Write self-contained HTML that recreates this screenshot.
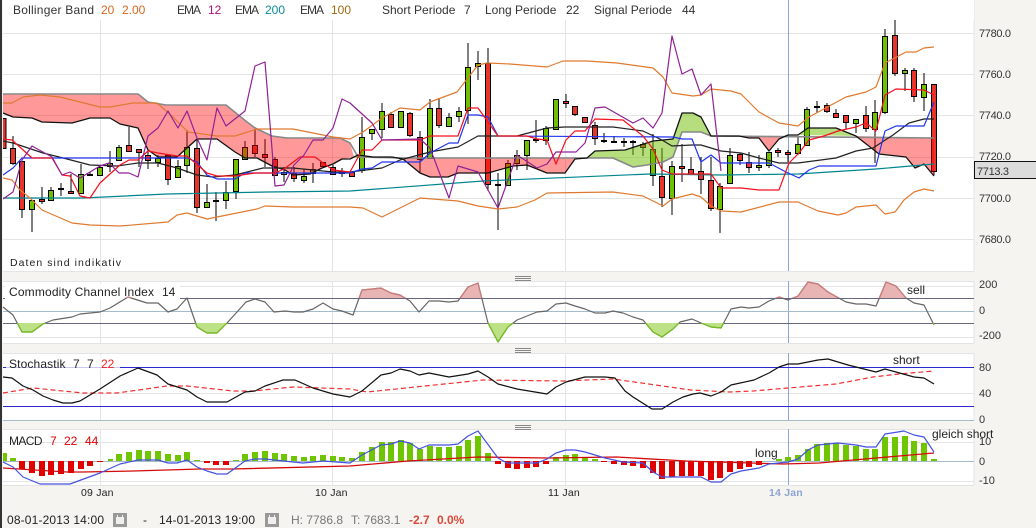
<!DOCTYPE html>
<html><head><meta charset="utf-8"><title>Chart</title>
<style>
html,body{margin:0;padding:0;background:#f5f4f1;width:1036px;height:528px;overflow:hidden}
svg{display:block}
text{font-family:"Liberation Sans",sans-serif;font-size:12px;fill:#333}
.ln{fill:none;stroke-linejoin:round;stroke-width:1.2}
.ax{font-size:11px;fill:#333}
.d{font-size:10.5px;fill:#222;letter-spacing:.2px}
</style></head><body>
<svg width="1036" height="528" viewBox="0 0 1036 528" xmlns="http://www.w3.org/2000/svg">
<defs>
<clipPath id="up"><rect x="0" y="270" width="974" height="28"/></clipPath>
<clipPath id="dn"><rect x="0" y="323" width="974" height="22"/></clipPath>
<clipPath id="main"><rect x="3" y="0" width="971" height="271"/></clipPath>
</defs>
<rect width="1036" height="528" fill="#f5f4f1"/>
<rect x="0" y="0" width="2" height="528" fill="#333"/>
<!-- panes -->
<rect x="3" y="0" width="971" height="271" fill="#fff"/>
<rect x="3" y="281" width="971" height="62" fill="#fff"/>
<rect x="3" y="353" width="971" height="67" fill="#fff"/>
<rect x="3" y="429" width="971" height="56" fill="#fff"/>
<g shape-rendering="crispEdges" fill="none" stroke-width="1">
<path stroke="#e4e4e4" d="M3 33.5H974M3 74.5H974M3 115.5H974M3 157.5H974M3 198.5H974M3 239.5H974M3 271.5H974M974 0V271M3 281.5H974M3 286.5H974M3 337.5H974M3 343.5H974M974 281V343M3 353.5H974M3 393.5H974M974 353V420M3 429.5H974M3 442.5H974M3 481.5H974M3 485.5H974M974 429V485"/>
<path stroke="#e4e4e4" d="M100.5 20V271M332.5 20V271M565.5 20V271M100.5 281V343M332.5 281V343M565.5 281V343M100.5 353V420M332.5 353V420M565.5 353V420M100.5 429V485M332.5 429V485M565.5 429V485"/>
<path stroke="#8fa3dc" d="M788.5 0V271M788.5 281V343M788.5 353V420M788.5 429V485"/>
<path stroke="#67677f" d="M3 298.5H974M3 323.5H974"/>
<path stroke="#a5bccb" d="M3 311.5H974M3 461.5H974M3 420.5H974"/>
<path stroke="#2a2ad0" d="M3 367.5H974M3 406.5H974"/>
</g>
<!-- candles -->
<g clip-path="url(#main)" shape-rendering="crispEdges">
<path fill="none" stroke="#000" stroke-width="1" d="M13 136V165M22 161V218M32 200V232M42 187V204M51 187V200M61 183V196M71 174V193M81 164V193M90 172V176M100 165V175M110 151V172M119 145V160M129 127V152M139 149V167M148 152V169M158 155V167M168 155V185M178 160V177M187 130V173M197 139V213M207 184V208M216 192V221M226 181V209M236 159V199M245 141V159M255 127V157M265 139V167M275 157V175M284 167V182M294 167V182M304 169V183M313 163V183M323 162V166M333 165V174M342 168V177M352 172V176M362 117V173M372 129V140M382 103V138M391 112V128M401 111V128M410 112V137M420 131V173M430 99V158M439 98V128M449 113V127M459 107V122M468 43V124M478 51V80M488 48V191M498 173V230M508 160V185M517 150V170M527 140V170M536 120V143M546 126V145M556 99V130M566 94V108M575 106V116M585 117V122M595 122V145M604 133V143M614 136V143M624 138V147M633 140V155M643 142V156M653 134V186M662 148V207M672 161V215M682 144V182M691 157V174M701 157V194M711 157V211M720 183V233M730 148V183M740 153V165M749 152V173M759 155V171M769 152V168M778 148V157M788 150V162M798 137V155M807 107V145M817 101V113M827 103V113M836 109V117M846 115V129M856 119V133M866 106V132M875 100V163M885 29V114M895 19V76M905 68V91M914 68V102M924 73V111M934 84V175"/>
<path fill="none" stroke="#000" stroke-width="2" d="M58 189H64M87 175H93M213 201H219M339 173H345M495 185H501M533 140H539M601 141H607M611 142H617M621 142H627M630 142H636M814 107H820"/>
<path fill="#e8352c" stroke="#000" stroke-width="1" d="M2.500 118.500h3.500V148.500h-3.500zM10.500 148.500h5V163.500h-5zM19.500 161.500h5V209.500h-5zM39.500 199.500h5V201.500h-5zM68.500 191.500h5V193.500h-5zM126.500 145.500h5V151.500h-5zM136.500 149.500h5V152.500h-5zM145.500 155.500h5V160.500h-5zM165.500 155.500h5V179.500h-5zM194.500 148.500h5V207.500h-5zM252.500 145.500h5V153.500h-5zM262.500 154.500h5V157.500h-5zM272.500 159.500h5V175.500h-5zM291.500 173.500h5V178.500h-5zM320.500 162.500h5V166.500h-5zM330.500 167.500h5V174.500h-5zM349.500 172.500h5V176.500h-5zM388.500 114.500h5V127.500h-5zM407.500 113.500h5V135.500h-5zM417.500 137.500h5V159.500h-5zM436.500 108.500h5V125.500h-5zM485.500 63.500h5V184.500h-5zM563.500 101.500h5V103.500h-5zM572.500 106.500h5V114.500h-5zM582.500 117.500h5V122.500h-5zM592.500 125.500h5V138.500h-5zM640.500 144.500h5V147.500h-5zM659.500 176.500h5V197.500h-5zM679.500 166.500h5V168.500h-5zM688.500 169.500h5V174.500h-5zM698.500 171.500h5V179.500h-5zM708.500 180.500h5V208.500h-5zM737.500 154.500h5V160.500h-5zM746.500 162.500h5V167.500h-5zM775.500 150.500h5V152.500h-5zM785.500 152.500h5V154.500h-5zM824.500 105.500h5V111.500h-5zM833.500 113.500h5V117.500h-5zM843.500 115.500h5V122.500h-5zM863.500 115.500h5V128.500h-5zM892.500 35.500h5V73.500h-5zM911.500 70.500h5V96.500h-5zM931.500 84.500h5V171.500h-5z"/>
<path fill="#6ec000" stroke="#000" stroke-width="1" d="M29.500 200.500h5V209.500h-5zM48.500 190.500h5V200.500h-5zM78.500 174.500h5V193.500h-5zM97.500 167.500h5V175.500h-5zM107.500 163.500h5V166.500h-5zM116.500 147.500h5V160.500h-5zM155.500 158.500h5V162.500h-5zM175.500 166.500h5V177.500h-5zM184.500 147.500h5V165.500h-5zM204.500 202.500h5V207.500h-5zM223.500 192.500h5V200.500h-5zM233.500 159.500h5V191.500h-5zM242.500 147.500h5V159.500h-5zM281.500 172.500h5V174.500h-5zM301.500 176.500h5V180.500h-5zM310.500 169.500h5V173.500h-5zM359.500 137.500h5V170.500h-5zM369.500 129.500h5V133.500h-5zM379.500 111.500h5V129.500h-5zM398.500 111.500h5V127.500h-5zM427.500 108.500h5V158.500h-5zM446.500 117.500h5V126.500h-5zM456.500 111.500h5V116.500h-5zM465.500 67.500h5V110.500h-5zM475.500 63.500h5V66.500h-5zM505.500 163.500h5V185.500h-5zM514.500 155.500h5V163.500h-5zM524.500 140.500h5V155.500h-5zM543.500 128.500h5V140.500h-5zM553.500 99.500h5V129.500h-5zM650.500 149.500h5V175.500h-5zM669.500 166.500h5V198.500h-5zM717.500 186.500h5V209.500h-5zM727.500 155.500h5V183.500h-5zM756.500 165.500h5V167.500h-5zM766.500 152.500h5V165.500h-5zM795.500 144.500h5V153.500h-5zM804.500 109.500h5V145.500h-5zM853.500 119.500h5V123.500h-5zM872.500 112.500h5V129.500h-5zM882.500 36.500h5V112.500h-5zM902.500 70.500h5V73.500h-5zM921.500 84.500h5V97.500h-5z"/>
</g>
<!-- kumo -->
<g clip-path="url(#main)">
<polygon fill="rgba(255,0,0,.4)" points="3,94 138,94 148,102 166,105 226,105 247,122 255,128 272,136 287,138 340,138 350,143 354,157 342,159 333,164 322,168 310,174 293,175 285,170 272,166 257,158 245,158 235,152 217,139 197,139 177,157 158,157 148,150 138,128 120,124 110,118 90,118 83,120 72,123 42,122 32,118 13,117 3,113"/>
<polygon fill="rgba(110,190,0,.5)" points="354,158 358,155 373,157 403,158"/>
<polygon fill="rgba(255,0,0,.4)" points="403,158 575,158 565,173 547,173 527,165 513,166 488,173 458,173 448,177 430,177 420,173"/>
<polygon fill="rgba(110,190,0,.5)" points="587,158 595,151 625,150 653,141 673,139 682,113 693,113 701,117 711,136 701,132 682,132 673,157 663,162 647,165 633,167 613,158"/>
<polygon fill="rgba(255,0,0,.4)" points="739,136 749,138 759,138 769,151 779,139 788,136"/>
<polygon fill="rgba(110,190,0,.5)" points="800,135 808,128 836,128 856,136"/>
<polygon fill="rgba(255,0,0,.4)" points="856,136 934,138 934,176 924,164 915,168 906,157 879,154"/>
<polyline class="ln" stroke="#888" style="stroke-width:1.6" points="3,94 138,94 148,102 166,105 226,105 247,122 255,128 272,136 287,138 340,138 350,143 358,157 403,158 575,158 613,158 633,167 647,165 663,162 673,157 682,132 701,132 711,136 934,138"/>
<polyline class="ln" stroke="#111" style="stroke-width:1.3" points="3,113 13,117 32,118 42,122 72,123 83,120 90,118 110,118 120,124 138,128 148,150 158,157 177,157 197,139 217,139 235,152 245,158 257,158 272,166 285,170 293,175 310,174 322,168 333,164 342,159 350,159 358,155 373,157 392,157 403,159 420,173 430,177 448,177 458,173 488,173 513,166 527,165 547,173 565,173 575,159 587,158 595,151 625,150 653,141 673,139 682,113 693,113 701,117 711,136 739,136 749,138 759,138 769,151 779,139 788,135 798,135 808,128 836,128 856,136 879,154 906,157 915,168 924,164 934,176"/>
<!-- teal -->
<polyline class="ln" stroke="#00858f" points="3,198 83,198 167,194 267,192 350,191 483,181 650,174 721,175 798,174 876,169 934,164"/>
<!-- bollinger -->
<polyline class="ln" stroke="#e07a30" points="3,103 12,103 23,97 40,95 60,97 80,102 100,107 110,107 133,103 157,103 173,117 188,132 217,136 235,136 257,129 293,129 333,137 350,139 363,132 382,118 400,108 420,110 430,102 457,92 478,65 487,63 510,64 547,67 563,61 587,61 617,63 653,68 663,77 672,93 693,96 701,95 711,89 731,91 741,94 759,112 779,123 798,126 809,117 846,97 866,92 876,87 885,63 906,52 916,52 924,48 934,47"/>
<polyline class="ln" stroke="#e07a30" points="3,178 12,180 20,190 30,198 42,210 72,223 90,225 120,226 168,222 177,215 187,213 207,219 227,215 257,209 265,206 293,207 350,207 363,208 382,217 400,208 420,198 458,201 478,206 498,209 517,207 535,200 547,193 613,192 643,196 663,206 672,199 692,194 701,197 711,206 721,211 741,212 779,202 798,202 818,211 838,215 846,213 856,207 876,205 885,214 895,212 904,200 914,192 924,189 934,191"/>
<!-- black thin -->
<polyline class="ln" stroke="#222" points="3,141 13,143 43,153 67,159 90,165 117,166 138,163 158,163 177,168 197,175 213,177 235,175 263,168 293,168 333,172 350,172 382,168 400,160 430,152 458,147 478,136 497,136 517,136 547,128 565,127 613,127 643,131 662,140 672,146 692,145 701,145 721,151 741,153 759,158 779,163 798,163 836,158 856,151 873,148 893,135 909,123 924,119 934,119"/>
<!-- blue -->
<polyline class="ln" stroke="#2035f0" points="3,175 13,168 22,158 32,158 187,158 197,162 207,175 217,179 235,179 245,173 350,173 362,169 372,168 382,162 420,162 430,153 449,143 458,143 468,115 478,115 488,117 498,136 673,137 682,139 692,139 701,162 711,155 721,163 769,163 786,172 799,178 809,170 819,166 876,166 885,131 896,126 924,126 934,102"/>
<!-- red -->
<polyline class="ln" stroke="#f5101e" points="3,139 12,140 32,158 52,158 62,175 70,176 80,196 90,198 100,183 120,165 129,160 138,160 148,151 158,153 177,156 187,156 207,173 217,176 235,176 255,173 275,173 284,169 300,157 315,157 333,170 350,172 362,150 372,150 382,140 420,140 430,136 458,136 468,108 478,108 498,136 527,136 537,139 547,140 556,164 566,140 575,131 585,131 595,119 623,120 643,136 653,149 662,170 672,174 711,174 721,188 741,188 759,190 779,190 789,163 799,153 809,140 824,136 838,131 856,127 866,123 876,131 885,95 896,89 924,90 934,95"/>
<!-- purple -->
<polyline class="ln" stroke="#8f2295" points="3,199 13,192 22,160 32,146 52,157 62,175 70,172 80,178 100,166 109,163 119,173 129,173 138,177 148,136 158,128 168,111 178,128 187,111 197,138 207,160 217,108 226,126 245,111 255,66 265,62 275,186 284,185 294,165 304,155 313,140 323,140 333,128 342,99 350,103 372,123 382,140 420,139 430,148 449,198 458,166 478,172 498,208 517,155 537,168 547,164 556,152 576,152 585,143 595,108 605,107 633,123 643,118 653,128 662,113 672,36 682,74 692,69 701,95 711,84 721,171"/>
</g>
<!-- CCI -->
<path clip-path="url(#up)" fill="#e8b4b4" stroke="none" d="M3 298L3 307 13 315 22 332 32 332 43 324 53 320 72 317 80 314 100 312 110 308 128 297 147 303 158 303 168 312 177 309 187 298 197 327 207 333 217 333 227 323 237 312 246 302 255 299 265 302 274 312 285 311 294 312 303 312 313 309 323 303 333 309 342 311 353 315 362 290 372 289 381 288 391 293 400 295 410 301 419 312 429 301 439 301 449 302 458 301 468 287 478 283 488 323 498 342 508 327 517 320 537 312 547 311 556 304 566 303 575 306 585 309 595 313 605 313 613 311 623 313 633 317 643 320 653 332 662 337 673 329 680 322 692 319 701 323 711 327 721 328 731 309 741 307 749 308 759 307 769 301 779 297 788 300 798 296 808 282 818 284 828 292 846 302 856 304 866 304 876 306 886 282 896 286 906 298 914 303 924 305 934 325L934 298Z"/>
<path clip-path="url(#dn)" fill="#bde285" stroke="none" d="M3 323L3 307 13 315 22 332 32 332 43 324 53 320 72 317 80 314 100 312 110 308 128 297 147 303 158 303 168 312 177 309 187 298 197 327 207 333 217 333 227 323 237 312 246 302 255 299 265 302 274 312 285 311 294 312 303 312 313 309 323 303 333 309 342 311 353 315 362 290 372 289 381 288 391 293 400 295 410 301 419 312 429 301 439 301 449 302 458 301 468 287 478 283 488 323 498 342 508 327 517 320 537 312 547 311 556 304 566 303 575 306 585 309 595 313 605 313 613 311 623 313 633 317 643 320 653 332 662 337 673 329 680 322 692 319 701 323 711 327 721 328 731 309 741 307 749 308 759 307 769 301 779 297 788 300 798 296 808 282 818 284 828 292 846 302 856 304 866 304 876 306 886 282 896 286 906 298 914 303 924 305 934 325L934 323Z"/>
<g>
<rect x="5" y="284" width="175" height="15" fill="#fff"/>
<polyline class="ln" stroke="#666" points="3,307 13,315 22,332 32,332 43,324 53,320 72,317 80,314 100,312 110,308 128,297 147,303 158,303 168,312 177,309 187,298 197,327 207,333 217,333 227,323 237,312 246,302 255,299 265,302 274,312 285,311 294,312 303,312 313,309 323,303 333,309 342,311 353,315 362,290 372,289 381,288 391,293 400,295 410,301 419,312 429,301 439,301 449,302 458,301 468,287 478,283 488,323 498,342 508,327 517,320 537,312 547,311 556,304 566,303 575,306 585,309 595,313 605,313 613,311 623,313 633,317 643,320 653,332 662,337 673,329 680,322 692,319 701,323 711,327 721,328 731,309 741,307 749,308 759,307 769,301 779,297 788,300 798,296 808,282 818,284 828,292 846,302 856,304 866,304 876,306 886,282 896,286 906,298 914,303 924,305 934,325"/>
<polyline clip-path="url(#dn)" class="ln" stroke="#74c01c" points="3,307 13,315 22,332 32,332 43,324 53,320 72,317 80,314 100,312 110,308 128,297 147,303 158,303 168,312 177,309 187,298 197,327 207,333 217,333 227,323 237,312 246,302 255,299 265,302 274,312 285,311 294,312 303,312 313,309 323,303 333,309 342,311 353,315 362,290 372,289 381,288 391,293 400,295 410,301 419,312 429,301 439,301 449,302 458,301 468,287 478,283 488,323 498,342 508,327 517,320 537,312 547,311 556,304 566,303 575,306 585,309 595,313 605,313 613,311 623,313 633,317 643,320 653,332 662,337 673,329 680,322 692,319 701,323 711,327 721,328 731,309 741,307 749,308 759,307 769,301 779,297 788,300 798,296 808,282 818,284 828,292 846,302 856,304 866,304 876,306 886,282 896,286 906,298 914,303 924,305 934,325"/>
<polyline clip-path="url(#up)" class="ln" stroke="#d07a7a" points="110,308 128,297 147,303 353,315 362,290 372,289 381,288 391,293 400,295 410,301 419,312 429,301 458,301 468,287 478,283 488,323 731,309 769,301 779,297 788,300 798,296 808,282 818,284 828,292 846,302 876,306 886,282 896,286 906,298 914,303"/>
</g>
<!-- Stoch -->
<polyline class="ln" stroke="#f03030" stroke-dasharray="5 3" points="3,393 33,388 83,393 117,393 167,386 187,386 233,391 253,391 293,387 350,389 367,392 483,380 563,381 613,379 691,390 729,392 753,391 788,388 836,384 873,377 899,374 934,371"/>
<polyline class="ln" stroke="#111" points="3,377 12,378 23,386 33,390 43,396 53,400 63,403 72,403 80,401 90,395 100,389 120,376 138,368 157,375 168,384 187,390 197,397 207,402 227,402 245,392 255,391 265,386 283,380 295,380 313,388 333,394 350,397 362,391 381,375 391,373 400,369 410,371 419,375 429,373 449,377 468,374 478,371 488,377 498,384 517,389 547,394 556,387 566,382 585,377 605,377 615,378 625,391 633,397 652,409 662,409 673,402 683,397 693,394 700,393 711,396 721,392 731,385 754,380 769,373 779,367 788,364 798,364 818,360 828,359 848,365 856,367 868,370 876,372 885,369 896,372 914,377 924,378 934,384"/>
<!-- MACD bars -->
<g shape-rendering="crispEdges">
<path fill="#6fc600" d="M3 453h4v8h-4zM10 458h6v3h-6zM108 459h5v2h-5zM116 454h6v7h-6zM126 452h6v9h-6zM136 450h6v11h-6zM145 451h6v10h-6zM155 451h6v10h-6zM165 454h6v7h-6zM175 455h6v6h-6zM184 452h6v9h-6zM194 460h6v1h-6zM233 460h6v1h-6zM242 454h6v7h-6zM252 452h6v9h-6zM262 451h6v10h-6zM272 453h6v8h-6zM281 454h6v7h-6zM291 456h6v5h-6zM301 457h6v4h-6zM310 456h6v5h-6zM320 455h6v6h-6zM330 456h6v5h-6zM339 457h6v4h-6zM349 458h6v3h-6zM359 452h6v9h-6zM369 447h6v14h-6zM379 442h6v19h-6zM388 442h6v19h-6zM398 440h6v21h-6zM407 443h6v18h-6zM417 449h6v12h-6zM427 446h6v15h-6zM436 447h6v14h-6zM446 447h6v14h-6zM456 446h6v15h-6zM465 440h6v21h-6zM475 436h6v25h-6zM485 453h6v8h-6zM553 457h6v4h-6zM563 455h6v6h-6zM572 454h6v7h-6zM582 457h6v4h-6zM592 459h6v2h-6zM776 459h6v2h-6zM785 457h6v4h-6zM795 455h6v6h-6zM805 449h6v12h-6zM814 444h6v17h-6zM824 443h6v18h-6zM833 443h6v18h-6zM843 445h6v16h-6zM853 446h6v15h-6zM863 449h6v12h-6zM872 449h6v12h-6zM882 437h6v24h-6zM892 437h6v24h-6zM902 436h6v25h-6zM911 441h6v20h-6zM921 443h6v18h-6zM931 459h6v2h-6z"/>
<path fill="#e00000" d="M19 461h6v8h-6zM29 461h6v12h-6zM39 461h6v15h-6zM48 461h6v14h-6zM58 461h6v13h-6zM68 461h6v12h-6zM78 461h6v8h-6zM87 461h6v5h-6zM97 461h6v1h-6zM204 461h6v2h-6zM213 461h6v4h-6zM223 461h6v4h-6zM495 461h6v3h-6zM505 461h6v7h-6zM514 461h6v8h-6zM524 461h6v7h-6zM533 461h6v6h-6zM543 461h6v3h-6zM601 461h6v1h-6zM611 461h6v3h-6zM621 461h6v4h-6zM630 461h6v5h-6zM640 461h6v7h-6zM650 461h6v12h-6zM659 461h6v18h-6zM669 461h6v16h-6zM679 461h6v15h-6zM688 461h6v15h-6zM698 461h6v15h-6zM708 461h6v19h-6zM717 461h6v17h-6zM727 461h6v11h-6zM737 461h6v8h-6zM746 461h6v6h-6zM756 461h6v4h-6z"/>
</g>
<polyline class="ln" stroke="#d40a0a" style="stroke-width:1.3" points="3,468 67,472 83,472 133,471 200,469 233,469 350,466 408,461 478,457 547,458 617,457 686,461 783,464 819,463 876,458 934,453"/>
<polyline class="ln" stroke="#4452e0" points="3,462 13,467 23,477 40,484 70,484 100,473 120,464 138,460 158,460 168,463 177,463 187,460 197,467 207,471 217,474 227,474 245,461 255,459 265,459 293,462 303,463 323,461 350,463 362,455 381,445 391,444 400,441 410,443 419,449 429,445 449,445 458,444 468,436 478,431 498,458 507,463 537,463 547,459 556,453 566,450 575,450 585,452 605,458 623,462 643,463 653,472 662,477 701,477 711,482 721,482 731,474 741,471 759,468 769,464 788,462 798,459 808,450 818,445 838,443 856,445 866,447 876,447 885,434 904,431 914,435 924,437 934,452"/>
<!-- handles -->
<path fill="none" stroke="#888" stroke-width="1" shape-rendering="crispEdges" d="M515 276.500H531M515 278.500H531M515 280.500H531M515 348.500H531M515 350.500H531M515 352.500H531M515 425.500H531M515 427.500H531M515 429.500H531"/>
<!-- legend -->
<rect x="3" y="0" width="971" height="20" fill="#fff"/>
<path shape-rendering="crispEdges" stroke="#8fa3dc" d="M788.500 0V20" fill="none"/>
<text x="13" y="14" textLength="81">Bollinger Band</text><text x="101" y="14" style="fill:#d9661f">20</text><text x="122" y="14" style="fill:#d9661f">2.00</text>
<text x="177" y="14" textLength="24">EMA</text><text x="208" y="14" style="fill:#b0107c">12</text>
<text x="235" y="14" textLength="24">EMA</text><text x="265" y="14" style="fill:#0e8a9a">200</text>
<text x="300" y="14" textLength="24">EMA</text><text x="331" y="14" style="fill:#a06a10">100</text>
<text x="382" y="14">Short Periode</text><text x="464" y="14">7</text>
<text x="485" y="14">Long Periode</text><text x="566" y="14">22</text>
<text x="594" y="14">Signal Periode</text><text x="682" y="14">44</text>
<text x="10" y="266" textLength="111" style="font-size:10.5px;fill:#222">Daten sind indikativ</text>
<!-- axis -->
<text class="ax" x="979" y="37" textLength="32">7780.0</text>
<text class="ax" x="979" y="78" textLength="32">7760.0</text>
<text class="ax" x="979" y="119" textLength="32">7740.0</text>
<text class="ax" x="979" y="160" textLength="32">7720.0</text>
<text class="ax" x="979" y="202" textLength="32">7700.0</text>
<text class="ax" x="979" y="243" textLength="32">7680.0</text>
<rect x="974.500" y="161.500" width="62" height="17" fill="#dcdcdc" stroke="#111"/>
<text class="ax" x="977" y="175" textLength="32">7713.3</text>
<text class="ax" x="979" y="288">200</text><text class="ax" x="979" y="314">0</text><text class="ax" x="979" y="339">-200</text>
<text class="ax" x="979" y="371">80</text><text class="ax" x="979" y="397">40</text><text class="ax" x="979" y="423">0</text>
<text class="ax" x="979" y="445">10</text><text class="ax" x="979" y="465">0</text><text class="ax" x="979" y="484">-10</text>
<!-- pane labels -->
<text x="9" y="296" textLength="145" style="fill:#222">Commodity Channel Index</text><text x="162" y="296" style="fill:#222">14</text>
<rect x="6" y="355" width="114" height="14" fill="#fff" opacity=".75"/>
<text x="9" y="368" textLength="56.500" style="fill:#222">Stochastik</text><text x="73" y="368" style="fill:#222">7</text><text x="87" y="368" style="fill:#222">7</text><text x="101" y="368" style="fill:#f02020">22</text>
<text x="9" y="445" textLength="33.500" style="fill:#222">MACD</text><text x="50" y="445" style="fill:#e00000">7</text><text x="64" y="445" style="fill:#e00000">22</text><text x="85" y="445" style="fill:#e00000">44</text>
<!-- annotations -->
<text x="907" y="294" style="fill:#222">sell</text>
<text x="893" y="364" style="fill:#222">short</text>
<text x="755" y="457" style="fill:#222">long</text>
<text x="932" y="438" style="fill:#222">gleich short</text>
<!-- dates -->
<text class="d" x="81" y="496">09 Jan</text>
<text class="d" x="315" y="496">10 Jan</text>
<text class="d" x="548" y="496">11 Jan</text>
<text class="d" x="769" y="496" style="fill:#8ea3d4;font-weight:bold">14 Jan</text>
<!-- footer -->
<text x="7" y="524" textLength="97" style="fill:#222">08-01-2013 14:00</text>
<rect x="113" y="513" width="14" height="14" fill="#999"/><rect x="116" y="517" width="8" height="7" fill="#f0f0ee"/><path d="M117.500 515v3M122.500 515v3" stroke="#f0f0ee" stroke-width="1"/>
<text x="143" y="524" style="fill:#222">-</text>
<text x="159" y="524" textLength="96" style="fill:#222">14-01-2013 19:00</text>
<rect x="265" y="513" width="14" height="14" fill="#999"/><rect x="268" y="517" width="8" height="7" fill="#f0f0ee"/><path d="M269.500 515v3M274.500 515v3" stroke="#f0f0ee" stroke-width="1"/>
<text x="291" y="524" style="fill:#777">H: 7786.8</text>
<text x="351" y="524" style="fill:#777">T: 7683.1</text>
<text x="409" y="524" style="fill:#d84a3a;font-weight:bold">-2.7</text>
<text x="437" y="524" style="fill:#d84a3a;font-weight:bold">0.0%</text>
</svg>
</body></html>
